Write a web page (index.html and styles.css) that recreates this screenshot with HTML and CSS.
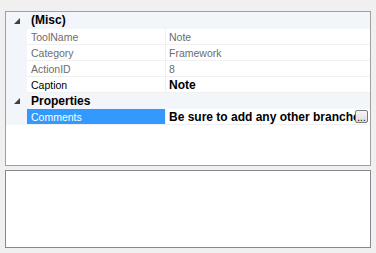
FILE: index.html
```html
<!DOCTYPE html>
<html>
<head>
<meta charset="utf-8">
<link rel="stylesheet" href="styles.css">
</head>
<body>
<div class="page">
  <div class="grid">
    <div class="row cat first">
      <div class="gutter"><svg class="tri" width="6" height="6" viewBox="0 0 6 6"><polygon points="6,0 6,6 0,6" fill="#404040"/></svg></div>
      <div class="cat-name">(Misc)</div>
    </div>
    <div class="row prop">
      <div class="gutter"></div>
      <div class="name ro">ToolName</div>
      <div class="value ro">Note</div>
    </div>
    <div class="row prop">
      <div class="gutter"></div>
      <div class="name ro">Category</div>
      <div class="value ro">Framework</div>
    </div>
    <div class="row prop">
      <div class="gutter"></div>
      <div class="name ro">ActionID</div>
      <div class="value ro">8</div>
    </div>
    <div class="row prop">
      <div class="gutter"></div>
      <div class="name">Caption</div>
      <div class="value bold">Note</div>
    </div>
    <div class="row cat">
      <div class="gutter"><svg class="tri" width="6" height="6" viewBox="0 0 6 6"><polygon points="6,0 6,6 0,6" fill="#404040"/></svg></div>
      <div class="cat-name">Properties</div>
    </div>
    <div class="row prop">
      <div class="gutter"></div>
      <div class="name selected">Comments</div>
      <div class="value bold edit"><span class="clip">Be sure to add any other branches</span><span class="dots">...</span></div>
    </div>
  </div>
  <div class="desc"></div>
</div>
</body>
</html>
```
FILE: styles.css
```css
html, body {
  margin: 0;
  padding: 0;
  background: #f0f0f0;
}
body {
  font-family: "Liberation Sans", Arial, sans-serif;
  font-size: 10.5px;
  color: #000;
}
.page {
  padding: 11px 0 0 5px;
  width: 366px;
  display: flex;
  flex-direction: column;
  gap: 4px;
}
.grid {
  box-sizing: border-box;
  height: 155px;
  border: 1px solid #a0a0a0;
  background: #fff;
  display: flex;
  flex-direction: column;
}
.row {
  display: flex;
  height: 16px;
  flex: none;
  box-sizing: border-box;
  line-height: 16px;
}
.row.first {
  height: 17px;
}
.gutter {
  width: 21px;
  flex: none;
  background: #f2f5fa;
  display: flex;
  align-items: center;
  justify-content: center;
}
.tri {
  display: block;
  margin-left: 1px;
}
.cat {
  background: #f2f5fa;
}
.cat-name {
  font-weight: bold;
  font-size: 12px;
  padding-left: 4px;
  line-height: 17px;
}
.prop .name {
  width: 139px;
  flex: none;
  padding-left: 4px;
  box-sizing: border-box;
  border-bottom: 1px solid #f0f0f0;
  border-right: 1px solid #f0f0f0;
  white-space: nowrap;
  overflow: hidden;
}
.prop .value {
  flex: 1;
  padding-left: 3px;
  border-bottom: 1px solid #f0f0f0;
  white-space: nowrap;
  overflow: hidden;
}
.ro {
  color: #6d6d6d;
}
.bold {
  font-weight: bold;
  font-size: 12px;
}
.selected {
  background: #3399ff;
  color: #fff;
}
.edit {
  display: flex;
  align-items: center;
}
.clip {
  flex: 1;
  overflow: hidden;
  white-space: nowrap;
  min-width: 0;
}
.dots {
  flex: none;
  width: 13px;
  height: 13px;
  box-sizing: border-box;
  border: 1px solid #7a7a7a;
  border-radius: 2px;
  background: linear-gradient(#f6f6f6, #dddddd);
  font-weight: normal;
  font-size: 10px;
  line-height: 13px;
  text-align: center;
  color: #000;
  margin-right: 2px;
  overflow: hidden;
}
.desc {
  box-sizing: border-box;
  height: 78px;
  border: 1px solid #828790;
  background: #fff;
}
```
